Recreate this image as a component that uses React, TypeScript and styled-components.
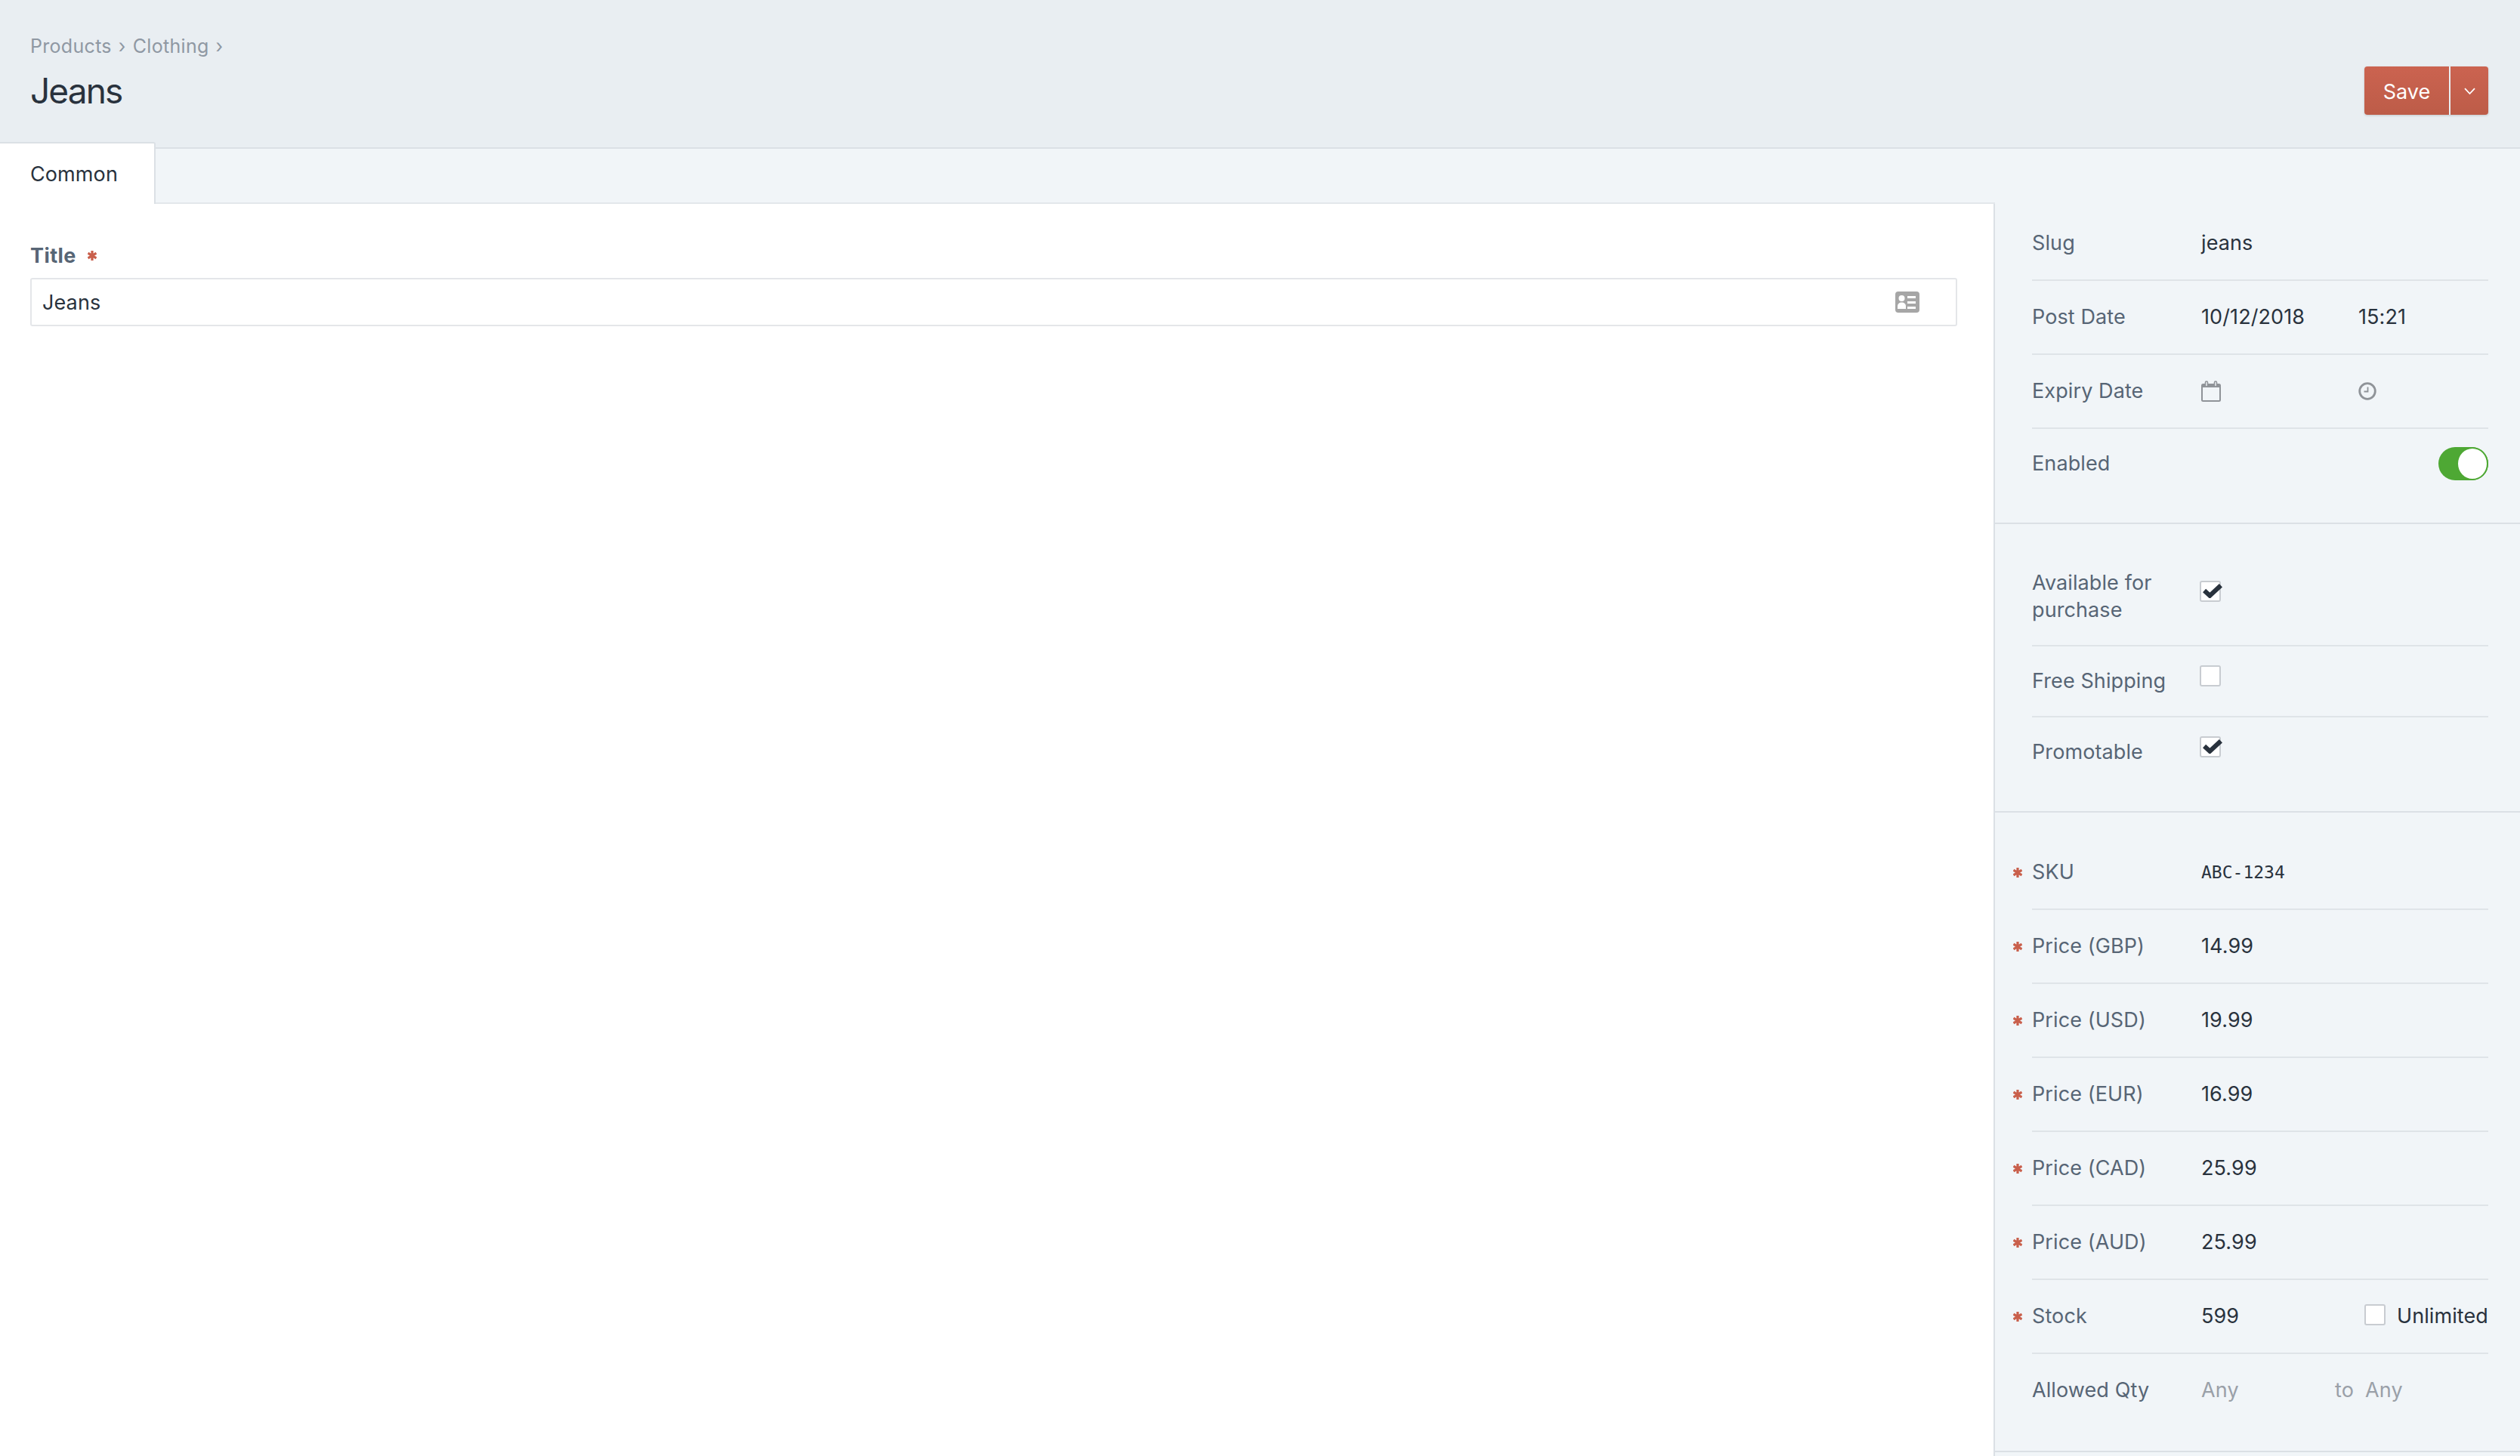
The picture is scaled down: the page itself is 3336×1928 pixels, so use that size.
import React from 'react'
import styled, { createGlobalStyle } from 'styled-components'

const GlobalStyle = createGlobalStyle`
  * { box-sizing: border-box; }
  html, body { margin: 0; padding: 0; background: #fff; }
  body {
    font-family: Inter, Roboto, "Liberation Sans", sans-serif;
    color: #29323d;
    font-size: 27px;
    letter-spacing: 0.1px;
  }
`

const Star = () => (
  <StarIcon viewBox="0 0 12 13">
    <path d="M6 0V13M0.5 3.2L11.5 9.8M11.5 3.2L0.5 9.8" stroke="#c95f4b" strokeWidth="3.2" fill="none" />
  </StarIcon>
)

const CheckMark = () => (
  <CheckSvg viewBox="0 0 25 18">
    <path d="M2 8.500L9 15L23 2" stroke="#29323d" strokeWidth="5.800" fill="none" />
  </CheckSvg>
)

const CardIcon = () => (
  <svg width="32" height="28" viewBox="0 0 32 28">
    <rect width="32" height="28" rx="4" fill="#a6a6a6" />
    <circle cx="8.5" cy="9" r="4" fill="#fff" />
    <path d="M3 23v-3.5c0-3 2.200-5 5.500-5s5.500 2 5.500 5V23z" fill="#fff" />
    <path d="M16 6h11v3H16zM16 13h11v3H16zM16 20h11v3H16z" fill="#fff" />
  </svg>
)

const CalendarIcon = () => (
  <svg width="26" height="28" viewBox="0 0 26 28">
    <rect x="1" y="5" width="24" height="22" rx="1.500" fill="none" stroke="#8f9398" strokeWidth="2" />
    <path d="M1 5h24v4H1z" fill="#8f9398" />
    <rect x="5.500" y="1" width="3" height="7" rx="1.500" fill="#f1f5f8" stroke="#8f9398" strokeWidth="1.600" />
    <rect x="17.500" y="1" width="3" height="7" rx="1.500" fill="#f1f5f8" stroke="#8f9398" strokeWidth="1.600" />
  </svg>
)

const ClockIcon = () => (
  <svg width="24" height="24" viewBox="0 0 24 24">
    <circle cx="12" cy="12" r="10.300" fill="none" stroke="#8f9398" strokeWidth="2.800" />
    <path d="M12.500 6.500V12.500H7.500" fill="none" stroke="#8f9398" strokeWidth="1.800" />
  </svg>
)

const Chevron = () => (
  <svg width="15" height="10" viewBox="0 0 15 10">
    <path d="M1 1.200L7.500 8L14 1.200" stroke="#fff" strokeWidth="1.800" fill="none" />
  </svg>
)

interface PriceRow {
  label: string
  value: string
}

const prices: PriceRow[] = [
  { label: 'Price (GBP)', value: '14.99' },
  { label: 'Price (USD)', value: '19.99' },
  { label: 'Price (EUR)', value: '16.99' },
  { label: 'Price (CAD)', value: '25.99' },
  { label: 'Price (AUD)', value: '25.99' }
]

const App: React.FC = () => (
  <>
    <GlobalStyle />
    <Page>
      <Header>
        <div>
          <Breadcrumbs>
            <span>Products</span>
            <Crumb>›</Crumb>
            <span>Clothing</span>
            <Crumb>›</Crumb>
          </Breadcrumbs>
          <PageTitle>Jeans</PageTitle>
        </div>
        <ButtonGroup>
          <SaveButton>Save</SaveButton>
          <MenuButton><Chevron /></MenuButton>
        </ButtonGroup>
      </Header>

      <Body>
        <MainColumn>
          <TabBar>
            <Tab>Common</Tab>
          </TabBar>
          <Content>
            <FieldLabel>
              Title <Star />
            </FieldLabel>
            <TitleInput>
              <span>Jeans</span>
              <CardIcon />
            </TitleInput>
          </Content>
        </MainColumn>

        <Sidebar>
          <MetaSection>
            <MetaRow>
              <Label>Slug</Label>
              <Value>jeans</Value>
            </MetaRow>
            <MetaRow>
              <Label>Post Date</Label>
              <Value>
                <DateCell>10/12/2018</DateCell>
                <span>15:21</span>
              </Value>
            </MetaRow>
            <MetaRow>
              <Label>Expiry Date</Label>
              <Value>
                <DateCell><CalendarIcon /></DateCell>
                <ClockIcon />
              </Value>
            </MetaRow>
            <SwitchRow>
              <Label>Enabled</Label>
              <Value $end>
                <Toggle><Knob /></Toggle>
              </Value>
            </SwitchRow>
          </MetaSection>

          <FlagSection>
            <MetaRow $compact>
              <Label>Available for<br />purchase</Label>
              <Value>
                <Checkbox $lift={14} $inset><CheckMark /></Checkbox>
              </Value>
            </MetaRow>
            <MetaRow $compact>
              <Label>Free Shipping</Label>
              <Value>
                <Checkbox $lift={14} $inset />
              </Value>
            </MetaRow>
            <MetaRow $compact>
              <Label>Promotable</Label>
              <Value>
                <Checkbox $lift={14} $inset><CheckMark /></Checkbox>
              </Value>
            </MetaRow>
          </FlagSection>

          <PriceSection>
            <MetaRow>
              <Label><Star />SKU</Label>
              <MonoValue>ABC-1234</MonoValue>
            </MetaRow>
            {prices.map(row => (
              <MetaRow key={row.label}>
                <Label><Star />{row.label}</Label>
                <Value>{row.value}</Value>
              </MetaRow>
            ))}
            <MetaRow>
              <Label><Star />Stock</Label>
              <Value>
                <span>599</span>
                <Unlimited>
                  <Checkbox $lift={4} />
                  Unlimited
                </Unlimited>
              </Value>
            </MetaRow>
            <MetaRow>
              <Label>Allowed Qty</Label>
              <Value $muted>
                <QtyCell>Any</QtyCell>
                <QtyTo>to</QtyTo>
                <span>Any</span>
              </Value>
            </MetaRow>
          </PriceSection>
        </Sidebar>
      </Body>
    </Page>
  </>
)

const Page = styled.div`
  width: 3336px;
  height: 1928px;
  display: flex;
  flex-direction: column;
  overflow: hidden;
`

const Header = styled.header`
  height: 197px;
  flex: none;
  display: flex;
  justify-content: space-between;
  align-items: flex-start;
  padding: 44px 42px 0 40px;
  background: #e9eef2;
  border-bottom: 2px solid #dbe0e5;
`

const Breadcrumbs = styled.div`
  display: flex;
  align-items: center;
  height: 34px;
  font-size: 25px;
  letter-spacing: 0.3px;
  color: #8f98a3;
`

const Crumb = styled.span`
  margin: 0 9px;
  &:last-child { margin-right: 0; }
`

const PageTitle = styled.h1`
  margin: 14px 0 0;
  font-size: 46px;
  line-height: 56px;
  font-weight: 400;
  letter-spacing: -1.9px;
  color: #29323d;
`

const ButtonGroup = styled.div`
  display: flex;
  margin-top: 44px;
  height: 64px;
  border-radius: 4px;
  box-shadow: 0 1px 3px rgba(41, 50, 61, 0.2);
  gap: 2px;
`

const SaveButton = styled.button`
  width: 112px;
  border: 0;
  padding: 2px 0 0;
  border-radius: 4px 0 0 4px;
  background: linear-gradient(#cb6350, #bd5c48);
  color: #fff;
  font: inherit;
  font-size: 27px;
  letter-spacing: 0;
`

const MenuButton = styled.button`
  width: 50px;
  border: 0;
  padding: 2px 0 0;
  border-radius: 0 4px 4px 0;
  background: linear-gradient(#cb6350, #bd5c48);
  display: flex;
  align-items: center;
  justify-content: center;
`

const Body = styled.div`
  flex: 1;
  display: flex;
  min-height: 0;
`

const MainColumn = styled.div`
  flex: 1;
  display: flex;
  flex-direction: column;
`

const TabBar = styled.nav`
  height: 73px;
  flex: none;
  display: flex;
  background: #f1f5f8;
  border-bottom: 2px solid #e3e7eb;
`

const Tab = styled.div`
  position: relative;
  width: 206px;
  height: 82px;
  margin-top: -9px;
  padding: 0 0 0 40px;
  display: flex;
  align-items: center;
  background: #fff;
  border-top: 2px solid #dbe0e5;
  border-right: 2px solid #dbe0e5;
  border-top-right-radius: 3px;
`

const Content = styled.main`
  flex: 1;
  padding: 50px 48px 0 40px;
  background: #fff;
  border-right: 2px solid #dbe0e5;
`

const FieldLabel = styled.div`
  display: flex;
  align-items: center;
  gap: 15px;
  height: 36px;
  font-weight: 700;
  letter-spacing: 0.4px;
  color: #576575;
`

const TitleInput = styled.div`
  margin-top: 12px;
  height: 64px;
  padding: 0 48px 0 14px;
  display: flex;
  align-items: center;
  justify-content: space-between;
  border: 2px solid #e4e6e9;
  border-radius: 3px;
`

const Sidebar = styled.aside`
  width: 695px;
  flex: none;
  background: #f1f5f8;
`

const MetaSection = styled.section`
  padding: 77px 42px 32px 49px;
  border-bottom: 2px solid #dbe0e5;
`

const FlagSection = styled(MetaSection)`
  padding-top: 32px;
`

const PriceSection = styled(MetaSection)`
  padding-top: 31px;
`

const MetaRow = styled.div<{ $compact?: boolean }>`
  display: flex;
  align-items: center;
  min-height: ${props => (props.$compact ? '94px' : '98px')};
  padding: ${props => (props.$compact ? '28px 0' : '0')};
  line-height: 36px;
  border-bottom: 2px solid #dfe4e8;

  &:last-child { border-bottom: 0; min-height: ${props => (props.$compact ? '92px' : '96px')}; }
`

const SwitchRow = styled(MetaRow)`
  padding: 24px 0;
  &:last-child { min-height: 92px; }
`

const Label = styled.div`
  width: 224px;
  flex: none;
  display: flex;
  flex-wrap: wrap;
  align-items: center;
  color: #576575;

  & > svg {
    margin-left: -25px;
    margin-right: 13px;
  }
`

const Value = styled.div<{ $end?: boolean; $muted?: boolean }>`
  flex: 1;
  display: flex;
  align-items: center;
  justify-content: ${props => (props.$end ? 'flex-end' : 'flex-start')};
  color: ${props => (props.$muted ? '#9aa0a8' : '#29323d')};
`

const MonoValue = styled(Value)`
  font-family: "DejaVu Sans Mono", "Liberation Mono", monospace;
  font-size: 23px;
  letter-spacing: 0;
`

const DateCell = styled.span`
  width: 208px;
  display: flex;
  align-items: center;
`

const QtyCell = styled.span`
  width: 177px;
`

const QtyTo = styled.span`
  width: 40px;
`

const Unlimited = styled.label`
  margin-left: auto;
  display: flex;
  align-items: center;
  gap: 15px;
`

const StarIcon = styled.svg`
  width: 12px;
  height: 13px;
  flex: none;
`

const CheckSvg = styled.svg`
  position: absolute;
  left: 2px;
  top: 2px;
  width: 26px;
  height: 19px;
`

const Checkbox = styled.span<{ $lift: number; $inset?: boolean }>`
  position: relative;
  display: block;
  flex: none;
  width: 28px;
  height: 28px;
  margin-left: ${props => (props.$inset ? '-2px' : '0')};
  margin-top: -${props => props.$lift}px;
  background: #fff;
  border: 2px solid #c8ccd1;
  border-radius: 3px;
`

const Toggle = styled.span`
  width: 66px;
  height: 44px;
  display: flex;
  justify-content: flex-end;
  background: #4ea834;
  border-radius: 22px;
`

const Knob = styled.span`
  width: 42px;
  height: 44px;
  background: #fff;
  border: 2px solid #4ea834;
  border-radius: 50%;
`

export default App
